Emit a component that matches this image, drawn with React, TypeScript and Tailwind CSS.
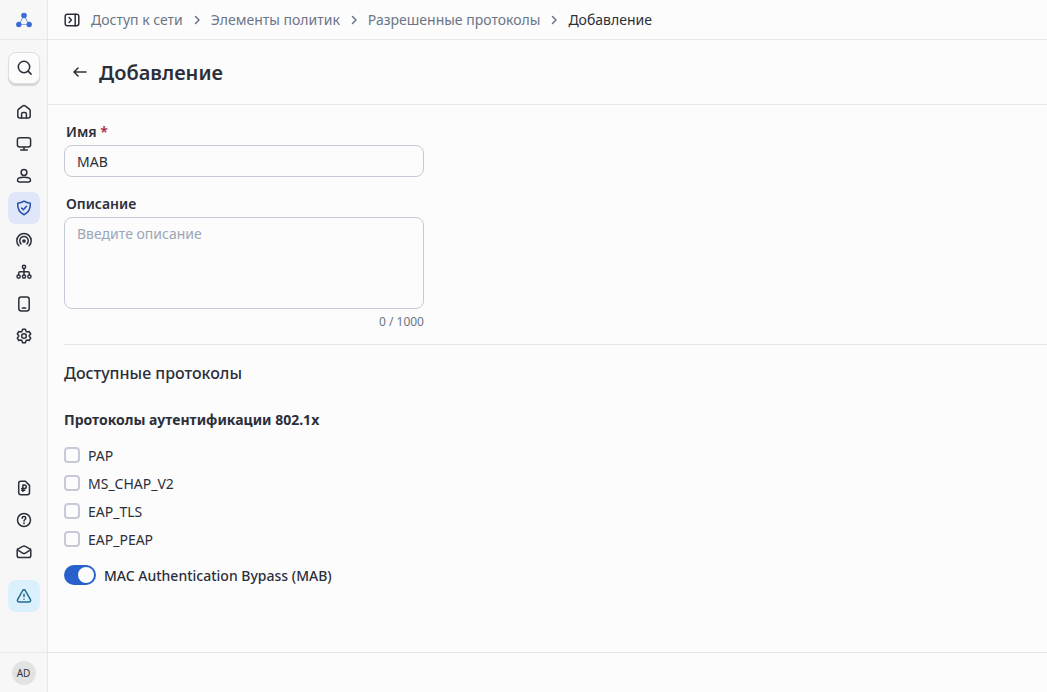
import { Fragment, useState } from "react";
import type { ReactNode } from "react";
import clsx from "clsx";

function Icon({ children, className }: { children: ReactNode; className?: string }) {
  return (
    <svg
      aria-hidden="true"
      className={clsx("h-4 w-4 shrink-0", className)}
      viewBox="0 0 16 16"
      fill="none"
      stroke="currentColor"
      strokeWidth="1.5"
      strokeLinecap="round"
      strokeLinejoin="round"
    >
      {children}
    </svg>
  );
}

const mainNav = [
  {
    label: "Главная",
    icon: (
      <>
        <path d="M1.8 7.1c0-.8.3-1.4.9-1.9l3.8-3.1c.9-.7 2.1-.7 3 0l3.8 3.1c.6.5.9 1.1.9 1.9v4.9c0 1.2-.8 2-2 2H3.8c-1.2 0-2-.8-2-2z" />
        <path d="M5.6 14V9.900c0-.9.6-1.500 1.500-1.500h1.800c.9 0 1.500.6 1.500 1.500V14" />
      </>
    ),
  },
  {
    label: "Устройства",
    icon: (
      <>
        <rect x="1.4" y="1.7" width="13.2" height="9.3" rx="2.2" />
        <path d="M8 11v2.9M4.7 13.9h6.6" />
      </>
    ),
  },
  {
    label: "Пользователи",
    icon: (
      <>
        <circle cx="8" cy="4.5" r="2.9" />
        <path d="M1.5 12c0-1.700 2.900-2.700 6.500-2.700s6.500 1 6.500 2.700c0 1.200-.7 2-2 2h-9c-1.300 0-2-.8-2-2z" />
      </>
    ),
  },
  {
    label: "Доступ к сети",
    active: true,
    icon: (
      <>
        <path d="M8 1.200c1.800 1.200 3.900 1.900 6.300 2.100.3 5.300-1.500 9.300-6.300 11.400-4.800-2.100-6.600-6.100-6.300-11.400C4.100 3.100 6.200 2.400 8 1.200z" />
        <path d="M5.600 8.100l1.800 1.700 3.100-3.500" />
      </>
    ),
  },
  {
    label: "Мониторинг",
    icon: (
      <>
        <path d="M2.900 13.800a7.200 7.200 0 1 1 10.200 0" />
        <path d="M5 11.900a4.300 4.300 0 1 1 6 0" />
        <circle cx="8" cy="9" r="1.100" fill="currentColor" />
      </>
    ),
  },
  {
    label: "Топология",
    icon: (
      <>
        <circle cx="8" cy="2.900" r="1.600" />
        <path d="M8 4.500v6M2.600 10.500V9.400c0-1 .7-1.600 1.600-1.600h7.600c.9 0 1.600.6 1.600 1.600v1.100" />
        <circle cx="2.600" cy="12.600" r="1.600" />
        <circle cx="8" cy="12.600" r="1.600" />
        <circle cx="13.400" cy="12.600" r="1.600" />
      </>
    ),
  },
  {
    label: "Гостевой доступ",
    icon: (
      <>
        <rect x="2.800" y="1" width="10.400" height="14" rx="2.400" />
        <path d="M6.300 12h3.400" />
      </>
    ),
  },
  {
    label: "Настройки",
    icon: (
      <>
        <path d="M6.600 1.300h2.800l.6 2 1.200.7 2-.5 1.500 2.500L13.300 7.500v1l1.400 1.500-1.500 2.500-2-.5-1.200.7-.6 2H6.600l-.6-2-1.200-.7-2 .5L1.300 10l1.400-1.500v-1L1.300 6l1.500-2.500 2 .5L6 3.300z" />
        <circle cx="8" cy="8" r="2.300" />
      </>
    ),
  },
];

const supportNav = [
  {
    label: "Лицензии",
    icon: (
      <>
        <path d="M2.700 3.400c0-1.300.8-2.100 2.100-2.100h4.600l4.100 4.100v7.200c0 1.300-.8 2.100-2.100 2.100H4.800c-1.300 0-2.100-.8-2.100-2.100z" />
        <path d="M6.900 11.600V5.100h1.600a1.700 1.700 0 0 1 0 3.500H5.700M5.700 10.300h3.100" />
      </>
    ),
  },
  {
    label: "Справка",
    icon: (
      <>
        <circle cx="8" cy="8" r="6.500" />
        <path d="M6.200 6.300c0-1 .8-1.700 1.800-1.700s1.800.7 1.800 1.600c0 1.200-1.800 1.400-1.800 2.700" />
        <path d="M8 11.200v.1" strokeWidth="1.700" />
      </>
    ),
  },
  {
    label: "Сообщения",
    icon: (
      <>
        <path d="M1.200 6.300c0-.7.300-1.200 1-1.500l4.500-2.500c.9-.5 1.700-.5 2.600 0l4.500 2.500c.7.300 1 .8 1 1.500v5.200c0 1.300-.8 2.100-2.100 2.100H3.300c-1.300 0-2.100-.8-2.100-2.100z" />
        <path d="M1.600 5.900l5 3.200c.9.600 1.900.6 2.800 0l5-3.200" />
      </>
    ),
  },
];

const crumbs = ["Доступ к сети", "Элементы политик", "Разрешенные протоколы"];
const protocols = ["PAP", "MS_CHAP_V2", "EAP_TLS", "EAP_PEAP"];

function NavButton({ label, active, children }: { label: string; active?: boolean; children: ReactNode }) {
  return (
    <button
      type="button"
      aria-label={label}
      className={clsx(
        "grid h-8 w-8 place-items-center rounded-lg",
        active ? "bg-[#dfe6f7] text-[#2450a8]" : "text-[#2b2f3a]",
      )}
    >
      <Icon>{children}</Icon>
    </button>
  );
}

function Sidebar() {
  return (
    <aside className="flex w-12 shrink-0 flex-col border-r border-[#e6e7eb] bg-[#f7f7f7]">
      <a href="#" aria-label="Домой" className="grid h-10 place-items-center border-b border-[#e8e8e8]">
        <svg aria-hidden="true" className="h-4 w-4" viewBox="0 0 16 16">
          <path d="M8 3.500L3 12.500h10z" fill="none" stroke="#8faae6" strokeWidth="1.200" />
          <g fill="#3a6bd6">
            <circle cx="8" cy="3.500" r="2.800" />
            <circle cx="2.800" cy="12.500" r="2.700" />
            <circle cx="13.200" cy="12.500" r="2.700" />
          </g>
        </svg>
      </a>
      <div className="flex flex-1 flex-col items-center py-3">
        <button
          type="button"
          aria-label="Поиск"
          className="mb-3 grid h-8 w-8 place-items-center rounded-lg border border-[#dedede] bg-[#fcfcfc] text-[#2b2f3a] shadow-[0_2px_1px_#d4d4d4]"
        >
          <Icon>
            <circle cx="8" cy="7" r="5.700" />
            <path d="M12.100 11.100l3 3" />
          </Icon>
        </button>
        <nav aria-label="Разделы">
          {mainNav.map((item) => (
            <NavButton key={item.label} label={item.label} active={item.active}>
              {item.icon}
            </NavButton>
          ))}
        </nav>
        <div className="mt-auto">
          {supportNav.map((item) => (
            <NavButton key={item.label} label={item.label}>
              {item.icon}
            </NavButton>
          ))}
        </div>
        <button
          type="button"
          aria-label="Предупреждения"
          className="mt-3 mb-7 grid h-8 w-8 place-items-center rounded-lg bg-[#daf1fd] text-[#20698f]"
        >
          <Icon>
            <path d="M6.700 2.500c.6-1 2-1 2.600 0l5.100 9.100c.6 1.100-.1 2.300-1.300 2.300H2.900c-1.200 0-1.900-1.200-1.300-2.300z" />
            <path d="M8 6.200v2.400M8 11.200v.1" />
          </Icon>
        </button>
      </div>
      <div className="grid h-10 place-items-center border-t border-[#e6e7eb]">
        <button
          type="button"
          className="grid h-6 w-6 place-items-center rounded-full bg-[#e2e2e2] text-[10px] leading-4 text-[#33363f]"
        >
          AD
        </button>
      </div>
    </aside>
  );
}

function Breadcrumbs() {
  return (
    <header className="flex h-10 items-center gap-[11px] border-b border-[#e8e8e8] px-4">
      <button type="button" aria-label="Развернуть меню">
        <Icon>
          <rect x="1.200" y="2.200" width="13.600" height="11.600" rx="2.200" />
          <path d="M11.200 2.200v11.600M5.100 5.600l2.300 2.400-2.300 2.400" />
        </Icon>
      </button>
      <nav aria-label="Навигация" className="flex items-center gap-1.5">
        {crumbs.map((crumb) => (
          <Fragment key={crumb}>
            <a href="#" className="text-[#6b7587]">
              {crumb}
            </a>
            <Icon className="text-[#6b7587]">
              <path d="M6.500 4.500L10 8l-3.500 3.500" />
            </Icon>
          </Fragment>
        ))}
        <span aria-current="page">Добавление</span>
      </nav>
    </header>
  );
}

export default function App() {
  const [name, setName] = useState("MAB");
  const [description, setDescription] = useState("");
  const [mab, setMab] = useState(true);

  return (
    <div className="flex min-h-screen bg-[#fcfcfc] font-['Noto_Sans',sans-serif] text-sm text-[#2b2f3a]">
      <Sidebar />
      <div className="flex min-w-0 flex-1 flex-col">
        <Breadcrumbs />
        <div className="flex items-start gap-[3px] border-b border-[#e8e8e8] px-4 pt-4 pb-3.5">
          <button type="button" aria-label="Назад" className="grid h-8 w-8 place-items-center">
            <Icon>
              <path d="M14 8H2M6 4L2 8l4 4" />
            </Icon>
          </button>
          <h1 className="text-xl leading-[34px] font-semibold">Добавление</h1>
        </div>

        <form className="flex-1 py-4 pl-4">
          <div className="flex w-full max-w-[360px] flex-col gap-4">
            <div className="flex flex-col gap-0.5">
              <label htmlFor="name" className="px-0.5 leading-[22px] font-semibold">
                Имя <span className="text-[#a3284f]">*</span>
              </label>
              <input
                id="name"
                required
                value={name}
                onChange={(e) => setName(e.target.value)}
                className="h-8 rounded-lg border border-[#c7cad6] px-3 outline-none"
              />
            </div>
            <div className="flex flex-col gap-0.5">
              <label htmlFor="description" className="px-0.5 leading-[22px] font-semibold">
                Описание
              </label>
              <textarea
                id="description"
                maxLength={1000}
                placeholder="Введите описание"
                value={description}
                onChange={(e) => setDescription(e.target.value)}
                className="h-[92px] resize-none rounded-lg border border-[#c7cad6] px-3 py-1.5 outline-none placeholder:text-[#9aa5b8]"
              />
              <p className="mt-0.5 text-right text-xs leading-[18px] text-[#6b7587]">{description.length} / 1000</p>
            </div>
          </div>

          <section className="mt-[13px] border-t border-[#e6e7eb] pt-4">
            <h2 className="text-base leading-6 font-medium">Доступные протоколы</h2>
            <fieldset className="mt-6">
              <legend className="leading-[22px] font-bold">Протоколы аутентификации 802.1x</legend>
              <div className="mt-3.5 flex flex-col gap-1.5">
                {protocols.map((protocol) => (
                  <label key={protocol} className="flex items-start gap-2 leading-[22px]">
                    <input
                      type="checkbox"
                      className="mt-0.5 h-4 w-4 appearance-none rounded border-2 border-[#c7cad6] checked:border-[#2860cc] checked:bg-[#2860cc]"
                    />
                    {protocol}
                  </label>
                ))}
              </div>
            </fieldset>
            <label className="mt-3.5 flex items-start gap-2 leading-[22px] font-medium">
              <input
                type="checkbox"
                role="switch"
                checked={mab}
                onChange={(e) => setMab(e.target.checked)}
                className="flex h-5 w-8 appearance-none items-center rounded-full bg-[#c7cad6] px-0.5 before:h-4 before:w-4 before:rounded-full before:bg-[#fcfcfc] checked:justify-end checked:bg-[#2860cc]"
              />
              MAC Authentication Bypass (MAB)
            </label>
          </section>
        </form>
        <footer className="h-10 border-t border-[#e6e7eb]" />
      </div>
    </div>
  );
}
